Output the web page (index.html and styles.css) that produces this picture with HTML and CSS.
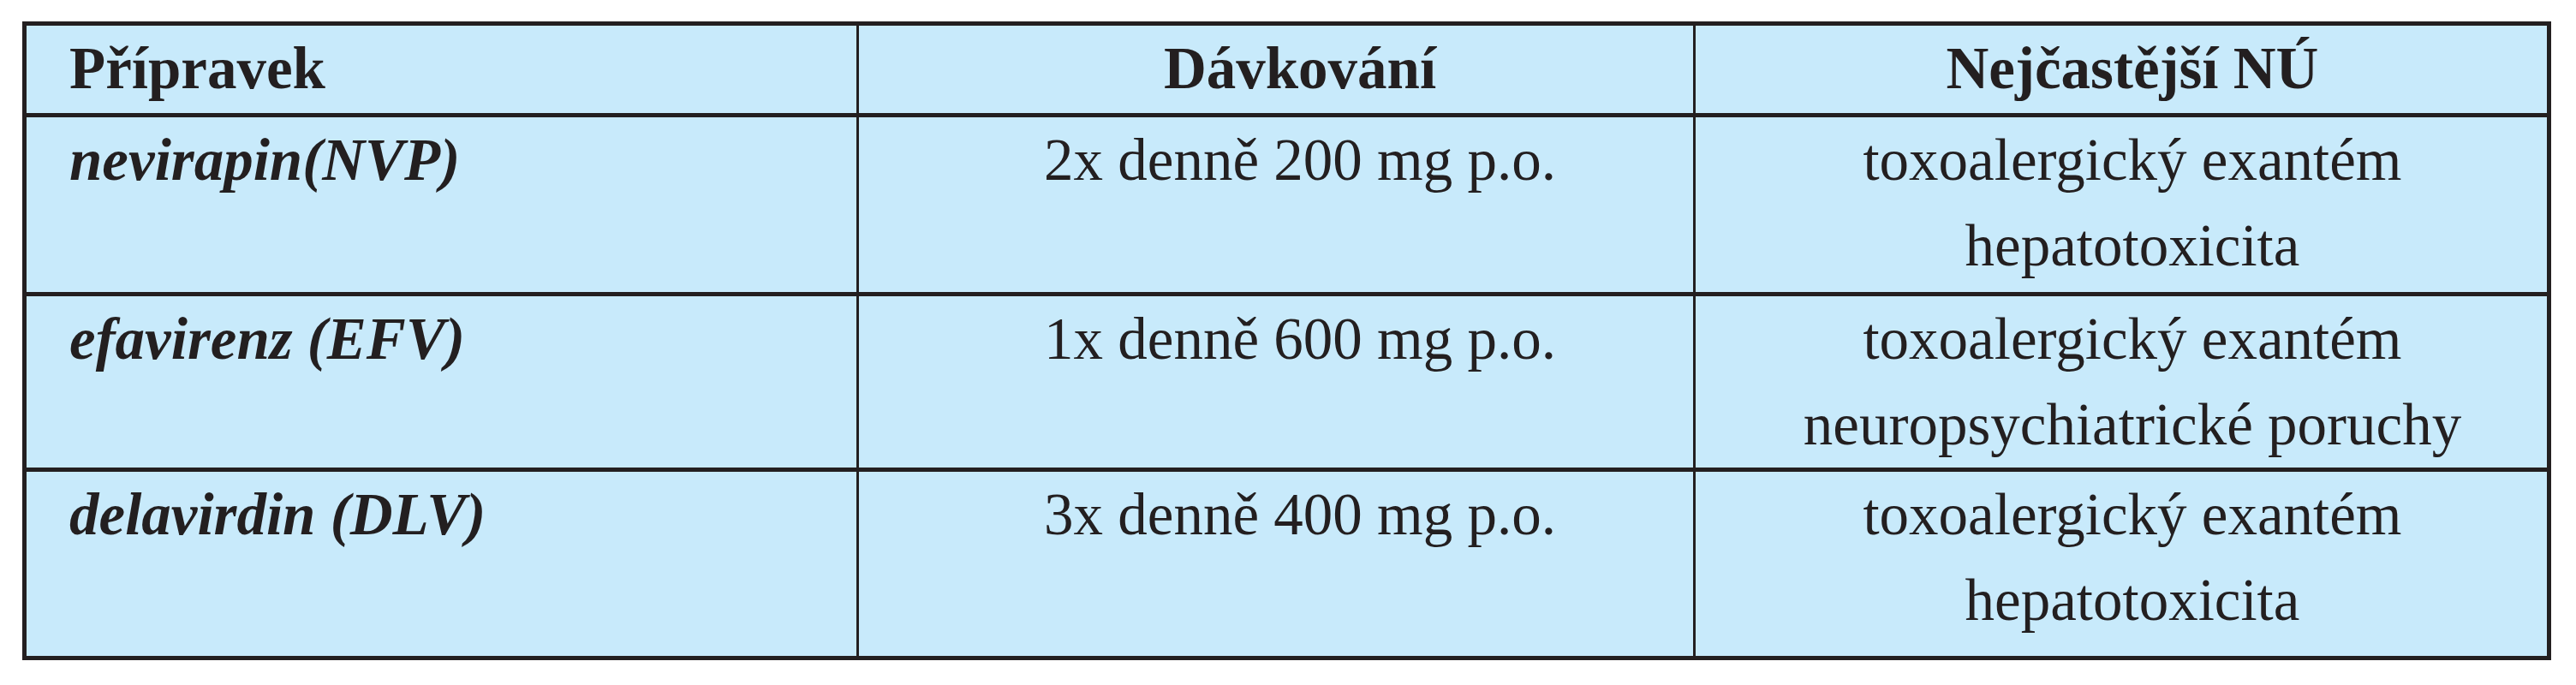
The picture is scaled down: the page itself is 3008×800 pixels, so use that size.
FILE: index.html
```html
<!DOCTYPE html>
<html lang="cs">
<head>
<meta charset="utf-8">
<title>NNRTI</title>
<link rel="stylesheet" href="styles.css">
</head>
<body>
<div class="table">
  <div class="cell c1 head">Přípravek</div>
  <div class="cell c2 head">Dávkování</div>
  <div class="cell c3 head">Nejčastější NÚ</div>

  <div class="cell c1 drug">nevirapin(NVP)</div>
  <div class="cell c2">2x denně 200 mg p.o.</div>
  <div class="cell c3">toxoalergický exantém<br>hepatotoxicita</div>

  <div class="cell c1 drug">efavirenz (EFV)</div>
  <div class="cell c2">1x denně 600 mg p.o.</div>
  <div class="cell c3">toxoalergický exantém<br>neuropsychiatrické poruchy</div>

  <div class="cell c1 drug">delavirdin (DLV)</div>
  <div class="cell c2">3x denně 400 mg p.o.</div>
  <div class="cell c3">toxoalergický exantém<br>hepatotoxicita</div>
</div>
</body>
</html>
```
FILE: styles.css
```css
html {
  background: #ffffff;
}
body {
  margin: 25px 0 0 26px;
  font-family: "Liberation Serif", "Times New Roman", serif;
  color: #231f20;
}
.table {
  display: grid;
  width: max-content;
  grid-template-columns: 969px 974px 994px;
  grid-template-rows: 102px 204px 200px 215px;
  column-gap: 3px;
  row-gap: 5px;
  background: #231f20;
  border: 5px solid #231f20;
}
.cell {
  background: #c8eafb;
  font-size: 69px;
  line-height: 100px;
  white-space: nowrap;
}
.c1 {
  padding-left: 50px;
  text-align: left;
}
.c2 {
  padding-left: 56px;
  text-align: center;
}
.c3 {
  padding-left: 26px;
  text-align: center;
}
.head {
  font-weight: bold;
}
.drug {
  font-weight: bold;
  font-style: italic;
}
```
